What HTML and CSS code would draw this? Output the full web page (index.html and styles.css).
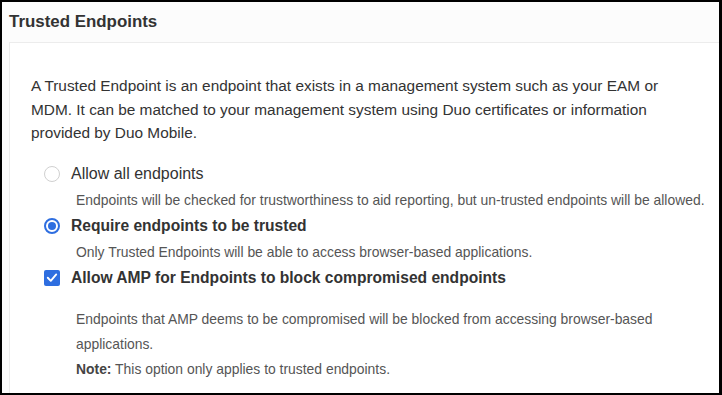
FILE: index.html
```html
<!DOCTYPE html>
<html>
<head>
<meta charset="utf-8">
<link rel="stylesheet" href="styles.css">
</head>
<body>
<div class="frame">
  <h2 class="title">Trusted Endpoints</h2>
  <div class="card">
    <p class="intro">A Trusted Endpoint is an endpoint that exists in a management system such as your EAM or MDM. It can be matched to your management system using Duo certificates or information provided by Duo Mobile.</p>
    <div class="options">
      <div class="opt">
        <span class="radio"></span>
        <span class="label">Allow all endpoints</span>
      </div>
      <div class="desc">Endpoints will be checked for trustworthiness to aid reporting, but un-trusted endpoints will be allowed.</div>
      <div class="opt">
        <span class="radio on"><span class="dot"></span></span>
        <span class="label strong">Require endpoints to be trusted</span>
      </div>
      <div class="desc">Only Trusted Endpoints will be able to access browser-based applications.</div>
      <div class="opt">
        <span class="check"><svg width="17" height="17" viewBox="0 0 17 17"><path d="M4 8.8 L7.2 12 L13 5.2" fill="none" stroke="#fff" stroke-width="2" stroke-linecap="round" stroke-linejoin="round"/></svg></span>
        <span class="label strong">Allow AMP for Endpoints to block compromised endpoints</span>
      </div>
      <div class="desc long">Endpoints that AMP deems to be compromised will be blocked from accessing browser-based applications.<br><b>Note:</b> This option only applies to trusted endpoints.</div>
    </div>
  </div>
</div>
</body>
</html>
```
FILE: styles.css
```css
html, body {
  margin: 0;
  padding: 0;
  background: #fff;
}
.frame {
  width: 722px;
  height: 395px;
  box-sizing: border-box;
  border: 2px solid #000;
  border-right-width: 3px;
  background: #fcfcfc;
  overflow: hidden;
  font-family: "Liberation Sans", Arial, sans-serif;
  color: #333;
}
.title {
  margin: 0;
  padding: 10px 0 0 7px;
  height: 31px;
  box-sizing: border-box;
  font-size: 16.9px;
  font-weight: bold;
  line-height: 20px;
  color: #333;
}
.card {
  margin: 9px -10px 0 7px;
  background: #fff;
  border: 1px solid #ececec;
  padding: 31px 0 0 21px;
  height: 400px;
}
.intro {
  margin: 0;
  font-size: 15.4px;
  line-height: 23.5px;
  color: #333;
  width: 668px;
}
.options {
  margin-top: 16px;
  padding-left: 13px;
}
.opt {
  display: flex;
  align-items: center;
  height: 26px;
}
.radio {
  width: 16px;
  height: 16px;
  box-sizing: border-box;
  border: 1px solid #d0d0d0;
  border-radius: 50%;
  background: #fff;
  display: flex;
  align-items: center;
  justify-content: center;
  flex: none;
}
.radio.on {
  border: 2px solid #2e6ee0;
}
.dot {
  width: 8px;
  height: 8px;
  border-radius: 50%;
  background: #2e6ee0;
}
.check {
  width: 16px;
  height: 16px;
  border-radius: 2px;
  background: #2e6ee0;
  display: flex;
  align-items: center;
  justify-content: center;
  flex: none;
}
.check svg { display: block; }
.label {
  margin-left: 11px;
  font-size: 16px;
  color: #333;
}
.label.strong {
  font-weight: bold;
  font-size: 15.6px;
}
.desc {
  padding-left: 32px;
  height: 26px;
  line-height: 26px;
  font-size: 13.9px;
  color: #555;
  white-space: nowrap;
}
.desc.long {
  height: auto;
  margin-top: 16px;
  line-height: 25px;
  width: 600px;
  white-space: normal;
}
.desc b { color: #444; }
```
